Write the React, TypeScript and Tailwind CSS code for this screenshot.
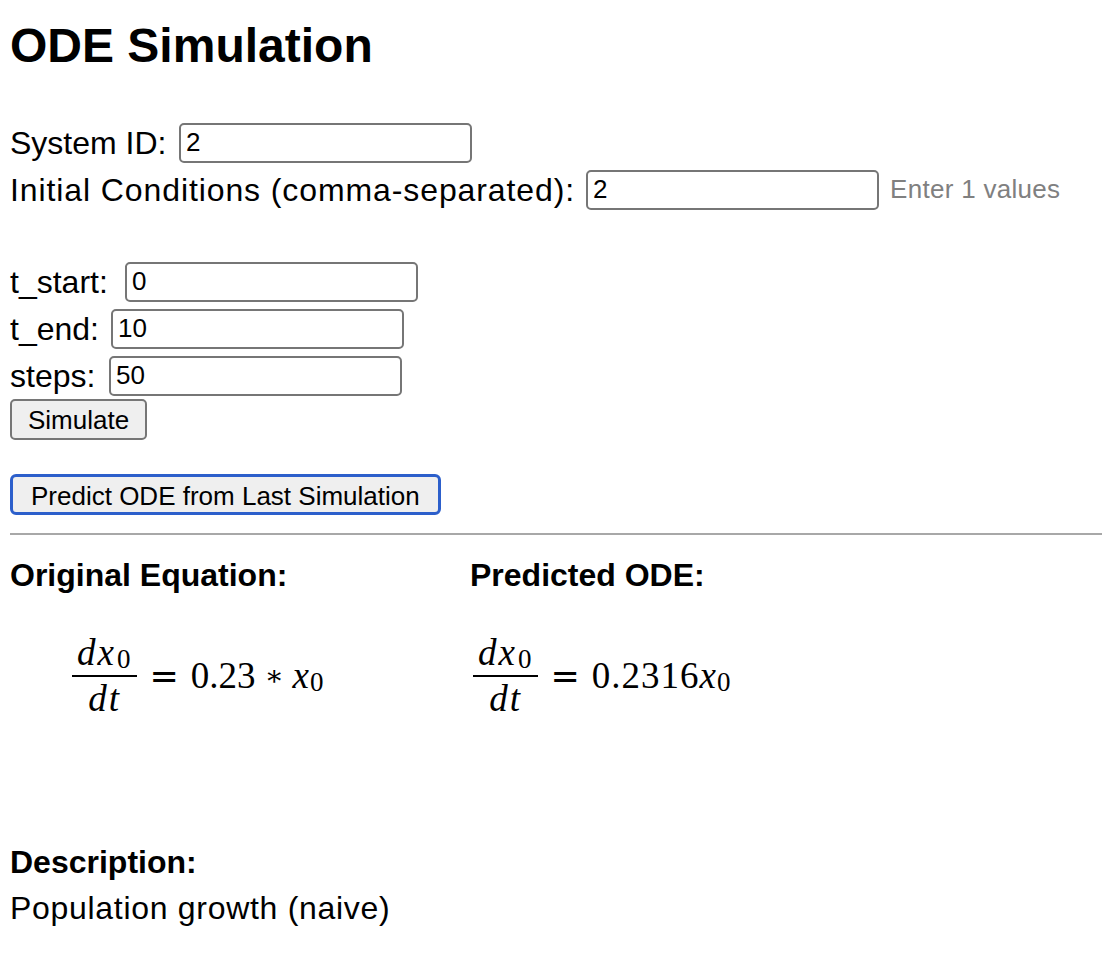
import React from "react";

function Field({ label, labelW, value, hint, wide }: { label: string; labelW: string; value: string; hint?: string; wide?: boolean }) {
  return (
    <div className="flex items-center h-[47px]">
      <span className={labelW + (wide ? " tracking-[0.9px]" : "")}>{label}</span>
      <input
        readOnly
        value={value}
        className="w-[293px] h-[40px] border-2 border-[#767676] rounded-[5px] px-[5px] text-[26px] text-black bg-white outline-none"
      />
      {hint && <span className="ml-[11px] text-[26px] tracking-[0.3px] text-[#808080]">{hint}</span>}
    </div>
  );
}

function Sub() {
  return <sub className="text-[27px] not-italic relative top-[3px] ml-[1px]">0</sub>;
}

function Frac() {
  return (
    <span className="inline-flex flex-col items-center">
      <span className="px-[5px] leading-[36px] tracking-[2px]">
        <i>dx</i>
        <Sub />
      </span>
      <span className="block w-full h-[2px] bg-black my-[4px]" />
      <span className="px-[5px] leading-[36px] tracking-[2px]">
        <i>dt</i>
      </span>
    </span>
  );
}

function Eq() {
  return <span className="mx-[12px] font-['DejaVu_Sans',sans-serif] text-[35px]">=</span>;
}

export default function App() {
  return (
    <div className="px-[10px] font-['Liberation_Sans',Arial,sans-serif] text-[32px] text-black bg-white min-h-[956px]">
      <h1 className="pt-[18px] text-[48px] leading-[56px] font-bold">ODE Simulation</h1>

      <div className="mt-[45px]">
        <Field label="System ID:" labelW="w-[169px]" value="2" />
        <Field label="Initial Conditions (comma-separated):" labelW="w-[576px]" value="2" hint="Enter 1 values" wide />
      </div>

      <div className="mt-[45px]">
        <Field label="t_start:" labelW="w-[115px]" value="0" />
        <Field label="t_end:" labelW="w-[101px]" value="10" />
        <Field label="steps:" labelW="w-[99px]" value="50" />
        <button className="block h-[41px] px-[16px] text-[26px] bg-[#efefef] border-2 border-[#767676] rounded-[5px]">
          Simulate
        </button>
      </div>

      <button className="block mt-[34px] h-[41px] px-[18px] text-[26px] bg-[#efefef] border-[3px] border-[#2c5fcb] rounded-[6px]">
        Predict ODE from Last Simulation
      </button>

      <hr className="mt-[18px] -mr-[10px] border-t-2 border-[#a8a8a8]" />

      <div className="flex mt-[22px]">
        <div className="w-[460px]">
          <h3 className="font-bold leading-[37px]">Original Equation:</h3>
          <div className="mt-[41px] ml-[62px] flex items-center font-['Liberation_Serif',serif] text-[37px]">
            <Frac />
            <Eq />
            <span>0.23</span>
            <span className="mx-[9px] font-['DejaVu_Serif',serif] text-[28px]">∗</span>
            <span>
              <i>x</i>
              <Sub />
            </span>
          </div>
        </div>
        <div>
          <h3 className="font-bold leading-[37px]">Predicted ODE:</h3>
          <div className="mt-[41px] ml-[3px] flex items-center font-['Liberation_Serif',serif] text-[37px]">
            <Frac />
            <Eq />
            <span className="tracking-[1px]">0.2316</span>
            <span>
              <i>x</i>
              <Sub />
            </span>
          </div>
        </div>
      </div>

      <div className="mt-[127px]">
        <h3 className="font-bold leading-[37px]">Description:</h3>
        <p className="mt-[9px] leading-[37px] tracking-[0.7px]">Population growth (naive)</p>
      </div>
    </div>
  );
}
